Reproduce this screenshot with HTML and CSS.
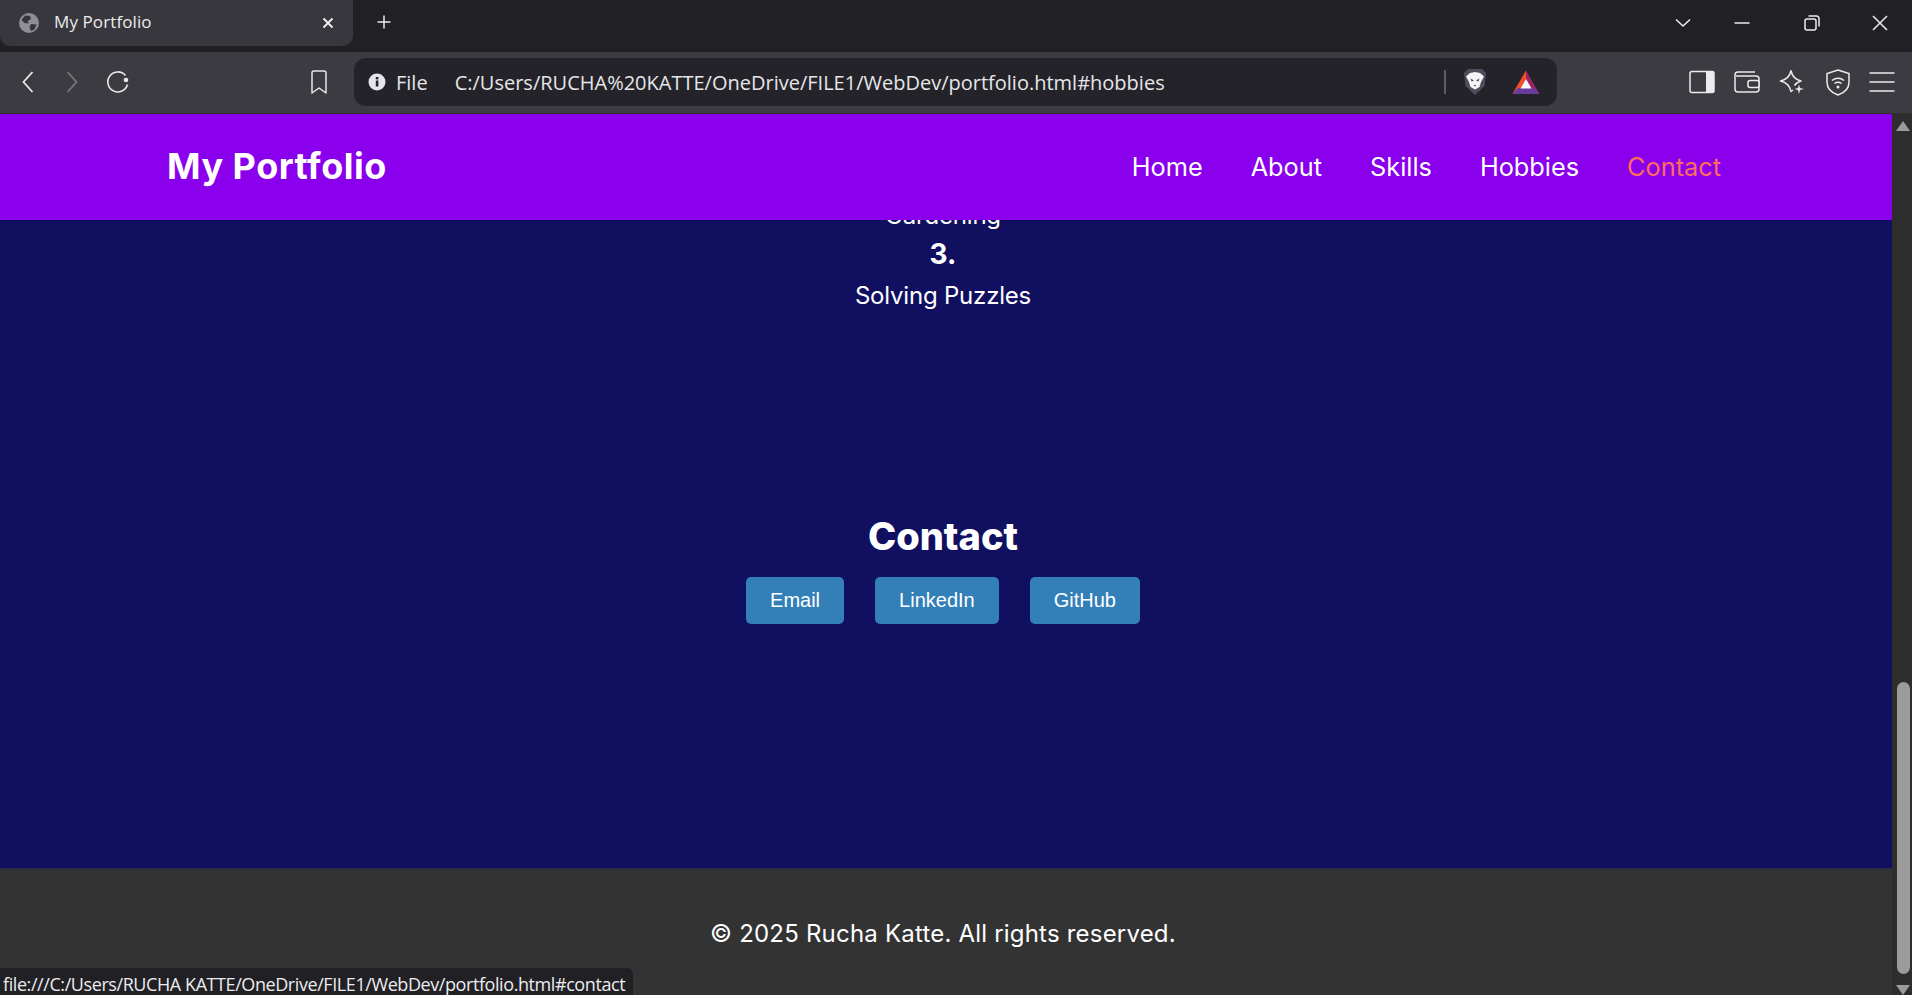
FILE: index.html

```html
<!DOCTYPE html>
<html lang="en">
<head>
    <meta charset="UTF-8">
    <meta name="viewport" content="width=device-width, initial-scale=1.0">
    <title>My Portfolio</title>
    <link rel="stylesheet" href="styles.css">
</head>
<body>
    <div class="tabstrip">
        <div class="tab">
            <svg class="tab-globe" width="20" height="20" viewBox="0 0 20 20">
                <circle cx="10" cy="10" r="10" fill="#8e8f94"/>
                <path d="M6 2.500 L11 3 L12 6 L9 8 L9.500 10.500 L5.500 10 L2.500 7 Z" fill="#35353b"/>
                <path d="M12 11 L17.500 11.500 L15.500 16.500 L12 18 L10.500 14 Z" fill="#35353b"/>
            </svg>
            <span class="tab-title">My Portfolio</span>
            <svg class="tab-close" width="12" height="12" viewBox="0 0 12 12">
                <path d="M1.500 1.500 L10.500 10.500 M10.500 1.500 L1.500 10.500" stroke="#f2f2f4" stroke-width="1.800" fill="none"/>
            </svg>
        </div>
        <svg class="new-tab" width="14" height="14" viewBox="0 0 14 14">
            <path d="M7 0.500 V13.500 M0.500 7 H13.500" stroke="#ececee" stroke-width="1.500" fill="none"/>
        </svg>
        <div class="window-controls">
            <svg width="16" height="10" viewBox="0 0 16 10"><path d="M1 1.500 L8 8 L15 1.500" stroke="#ececee" stroke-width="1.600" fill="none"/></svg>
            <svg width="16" height="4" viewBox="0 0 16 4"><path d="M0.500 2 H15.500" stroke="#ececee" stroke-width="1.500" fill="none"/></svg>
            <svg width="16" height="16" viewBox="0 0 16 16">
                <rect x="1" y="4" width="11" height="11" rx="2" stroke="#ececee" stroke-width="1.500" fill="none"/>
                <path d="M4.500 1 H12.500 A2.500 2.500 0 0 1 15 3.500 V11.500" stroke="#ececee" stroke-width="1.500" fill="none"/>
            </svg>
            <svg width="16" height="16" viewBox="0 0 16 16"><path d="M1 1 L15 15 M15 1 L1 15" stroke="#ececee" stroke-width="1.500" fill="none"/></svg>
        </div>
    </div>

    <div class="toolbar">
        <div class="nav-buttons">
            <svg width="12" height="22" viewBox="0 0 12 22"><path d="M10.500 1 L1.500 11 L10.500 21" stroke="#e8e8ea" stroke-width="1.800" fill="none"/></svg>
            <svg width="12" height="22" viewBox="0 0 12 22"><path d="M1.500 1 L10.500 11 L1.500 21" stroke="#77777b" stroke-width="1.800" fill="none"/></svg>
            <svg width="24" height="24" viewBox="0 0 24 24">
                <path d="M19.500 5.500 A10 10 0 1 0 21.500 14.500" stroke="#e8e8ea" stroke-width="1.600" fill="none"/>
                <circle cx="20" cy="10" r="2.300" fill="#e8e8ea"/>
            </svg>
        </div>
        <svg class="bookmark" width="16" height="25" viewBox="0 0 16 25">
            <path d="M1 3 A2 2 0 0 1 3 1 H13 A2 2 0 0 1 15 3 V23 L8 18 L1 23 Z" stroke="#e8e8ea" stroke-width="1.500" stroke-linejoin="round" fill="none"/>
        </svg>
        <div class="address-bar">
            <svg width="20" height="20" viewBox="0 0 20 20">
                <circle cx="10" cy="10" r="8.500" fill="#e4e4ea"/>
                <rect x="8.800" y="8.500" width="2.600" height="6" fill="#232329"/>
                <rect x="8.800" y="5" width="2.600" height="2.400" fill="#232329"/>
            </svg>
            <span class="scheme">File</span>
            <span class="url">C:/Users/RUCHA%20KATTE/OneDrive/FILE1/WebDev/portfolio.html#hobbies</span>
            <span class="address-divider"></span>
            <svg class="brave-icon" width="24" height="28" viewBox="0 0 24 28">
                <path d="M5 1 H19 L23 5 L21.500 18 L12 27 L2.500 18 L1 5 Z" fill="#4c4e5c"/>
                <path d="M7 5 L12 4 L17 5 L21 8.500 L18 14 L16.500 19 L12 21.500 L7.500 19 L6 14 L3 8.500 Z" fill="#f4f4f6"/>
                <path d="M7.500 10.500 L11 12.500 L8.500 13.500 Z M16.500 10.500 L13 12.500 L15.500 13.500 Z M10.500 17 H13.500 L12 18.500 Z" fill="#4c4e5c"/>
            </svg>
            <svg class="bat-icon" width="28" height="25" viewBox="0 0 28 25">
                <path d="M14 0.500 L0.500 24 H27.500 Z" fill="#9b2468"/>
                <path d="M14 0.500 L0.500 24 L9 19 L14 9 Z" fill="#f04e23"/>
                <path d="M0.500 24 H27.500 L22 18 H6 Z" fill="#6a3a9c"/>
                <path d="M14 9 L19.500 18.500 H8.500 Z" fill="#f7f7f7"/>
            </svg>
        </div>
        <div class="toolbar-icons">
            <svg width="26" height="24" viewBox="0 0 26 24">
                <rect x="1" y="1.500" width="24" height="21" rx="2" stroke="#ececee" stroke-width="1.500" fill="none"/>
                <rect x="17" y="1.500" width="8" height="21" fill="#ececee"/>
            </svg>
            <svg width="26" height="24" viewBox="0 0 26 24">
                <path d="M1 5 A3 3 0 0 1 4 2 H21 M1 5 V19 A3 3 0 0 0 4 22 H22 A3 3 0 0 0 25 19 V9 A3 3 0 0 0 22 6 H2" stroke="#ececee" stroke-width="1.500" fill="none"/>
                <rect x="14" y="10.500" width="11" height="7" rx="2" stroke="#ececee" stroke-width="1.500" fill="#3b3b41"/>
            </svg>
            <svg width="26" height="26" viewBox="0 0 26 26">
                <path d="M12 1.500 C13 7 16 10.500 22 12 C19 13 17 14 15.500 16.500 M12 1.500 C11 7 8 10.500 1.500 12 C8 13.500 11 17 12 22.500 L14 21" stroke="#ececee" stroke-width="1.500" stroke-linejoin="round" fill="none"/>
                <path d="M20 15.500 L21 19 L25 20 L21 21 L20 25 L19 21 L15.500 20 L19 19 Z" fill="#ececee"/>
            </svg>
            <svg class="shield-icon" width="24" height="27" viewBox="0 0 24 27">
                <path d="M12 1 L23 4.500 V13 C23 20 18 24 12 26 C6 24 1 20 1 13 V4.500 Z" stroke="#ececee" stroke-width="1.500" fill="none"/>
                <path d="M6 11.500 C9.500 8.500 14.500 8.500 18 11.500 M8.500 14.500 C10.500 13 13.500 13 15.500 14.500" stroke="#ececee" stroke-width="1.500" fill="none"/>
                <circle cx="12" cy="18" r="1.500" fill="#ececee"/>
            </svg>
            <svg width="26" height="20" viewBox="0 0 26 20">
                <path d="M0.500 1 H25.500 M0.500 10 H25.500 M0.500 19 H25.500" stroke="#ececee" stroke-width="1.500" fill="none"/>
            </svg>
        </div>
    </div>

    <div class="viewport">
        <div class="page">
            <header class="site-header">
                <div class="logo">My Portfolio</div>
                <nav class="site-nav">
                    <a href="#home">Home</a>
                    <a href="#about">About</a>
                    <a href="#skills">Skills</a>
                    <a href="#hobbies">Hobbies</a>
                    <a href="#contact" class="active">Contact</a>
                </nav>
            </header>
            <main class="content">
                <section class="hobbies">
                    <p class="hobby-text">Gardening</p>
                    <h3 class="hobby-num">3.</h3>
                    <p class="hobby-text">Solving Puzzles</p>
                </section>
                <section class="contact">
                    <h2>Contact</h2>
                    <div class="contact-links">
                        <a class="btn" href="#email">Email</a>
                        <a class="btn" href="#linkedin">LinkedIn</a>
                        <a class="btn" href="#github">GitHub</a>
                    </div>
                </section>
            </main>
            <footer class="site-footer">© 2025 Rucha Katte. All rights reserved.</footer>
            <div class="status-bubble">file:///C:/Users/RUCHA KATTE/OneDrive/FILE1/WebDev/portfolio.html#contact</div>
        </div>
        <div class="scrollbar">
            <span class="arrow-up"></span>
            <span class="thumb"></span>
            <span class="arrow-down"></span>
        </div>
    </div>
</body>
</html>
```

FILE: styles.css

```css
* {
    box-sizing: border-box;
}

html, body {
    height: 100%;
}

body {
    margin: 0;
    display: flex;
    flex-direction: column;
    overflow: hidden;
    background-color: #2b2b2b;
    font-family: 'Inter', 'Open Sans', sans-serif;
}

/* browser chrome */
.tabstrip {
    height: 52px;
    flex: none;
    display: flex;
    align-items: flex-start;
    background-color: #202025;
    font-family: 'Open Sans', sans-serif;
}

.tab {
    width: 353px;
    height: 46px;
    padding: 0 19px 0 19px;
    display: flex;
    align-items: center;
    gap: 15px;
    background-color: #37373d;
    border-radius: 0 0 10px 10px;
    color: #ececee;
    font-size: 17px;
}

.tab-title {
    flex: 1;
    padding-bottom: 3px;
    letter-spacing: 0.1px;
}

.new-tab {
    margin: 15px 0 0 24px;
}

.window-controls {
    margin: 0 0 0 auto;
    height: 46px;
    padding: 0 24px 0 0;
    display: flex;
    align-items: center;
}

.window-controls svg:nth-child(2) {
    margin-left: 43px;
}

.window-controls svg:nth-child(3) {
    margin-left: 54px;
}

.window-controls svg:nth-child(4) {
    margin-left: 52px;
}

.toolbar {
    height: 62px;
    flex: none;
    padding-bottom: 1px;
    display: flex;
    align-items: center;
    background-color: #3b3b41;
    border-bottom: 1px solid #2f2f33;
}

.nav-buttons {
    width: 300px;
    padding: 0 0 0 22px;
    display: flex;
    align-items: center;
    gap: 32px;
}

.nav-buttons svg:last-child {
    margin-left: -4px;
}

.bookmark {
    margin-left: 11px;
}

.address-bar {
    width: 1203px;
    height: 48px;
    margin-left: 27px;
    padding: 0 17px 0 13px;
    display: flex;
    align-items: center;
    background-color: #232329;
    border-radius: 12px;
    color: #e6e6e8;
    font-family: 'Open Sans', sans-serif;
    font-size: 20px;
}

.scheme {
    margin-left: 9px;
}

.url {
    flex: 1;
    margin-left: 27px;
    white-space: nowrap;
}

.address-divider {
    width: 2px;
    height: 24px;
    background-color: #5c5c62;
}

.brave-icon {
    margin-left: 17px;
}

.bat-icon {
    margin-left: 25px;
}

.toolbar-icons {
    margin-left: 132px;
    display: flex;
    align-items: center;
    gap: 19px;
}

.shield-icon {
    margin-left: 2px;
}

/* page */
.viewport {
    flex: 1;
    min-height: 0;
    display: flex;
}

.page {
    flex: 1;
    position: relative;
    display: flex;
    flex-direction: column;
    overflow: hidden;
    color: #fff;
    background-color: #110f60;
}

.site-header {
    height: 106px;
    flex: none;
    z-index: 2;
    padding: 0 171px 2px 167px;
    display: flex;
    align-items: center;
    justify-content: space-between;
    background-color: #8a00ed;
}

.logo {
    font-size: 36px;
    font-weight: 700;
    letter-spacing: 0.5px;
}

.site-nav {
    display: flex;
    gap: 48px;
}

.site-nav a {
    color: #fff;
    font-size: 25.3px;
    text-decoration: none;
}

.site-nav a.active {
    color: #ff6b5e;
}

.content {
    flex: 1;
    min-height: 0;
    padding-right: 6px;
    text-align: center;
}

.hobbies {
    margin-top: -22px;
}

.hobby-text {
    margin: 0;
    font-size: 24px;
    line-height: 36px;
    letter-spacing: -0.2px;
}

.hobby-num {
    margin: 2px 0 6px;
    font-size: 28px;
    font-weight: 700;
    line-height: 36px;
}

.contact {
    margin-top: 195px;
}

.contact h2 {
    margin: 0;
    font-size: 38px;
    font-weight: 800;
    line-height: 54px;
}

.contact-links {
    margin-top: 14px;
    display: flex;
    justify-content: center;
    gap: 31px;
}

.btn {
    height: 47px;
    padding: 0 24px;
    display: flex;
    align-items: center;
    background-color: #3380b8;
    border-radius: 5px;
    color: #fff;
    font-family: 'Liberation Sans', sans-serif;
    font-size: 20px;
    text-decoration: none;
}

.site-footer {
    height: 127px;
    flex: none;
    padding: 47px 6px 0 0;
    background-color: #333;
    border-top: 1px solid #2a2a48;
    font-size: 24px;
    line-height: 36px;
    letter-spacing: 0.2px;
    text-align: center;
}

.status-bubble {
    position: absolute;
    left: 0;
    bottom: 0;
    height: 27px;
    padding: 3px 8px 0 3px;
    background-color: #202025;
    border-top-right-radius: 6px;
    color: #ececee;
    font-family: 'Open Sans', sans-serif;
    font-size: 18px;
    line-height: 27px;
    letter-spacing: -0.42px;
    white-space: nowrap;
}

.scrollbar {
    width: 20px;
    flex: none;
    padding-left: 2px;
    display: flex;
    flex-direction: column;
    align-items: center;
    background-color: #2d2d2d;
}

.arrow-up,
.arrow-down {
    width: 0;
    height: 0;
    flex: none;
    border-left: 7.5px solid transparent;
    border-right: 7.5px solid transparent;
}

.arrow-up {
    margin-top: 7px;
    border-bottom: 10px solid #9b9b9b;
}

.thumb {
    width: 13px;
    height: 292px;
    flex: none;
    margin-top: 551px;
    background-color: #9b9b9b;
    border-radius: 7px;
}

.arrow-down {
    margin-top: 11px;
    border-top: 10px solid #9b9b9b;
}
```
